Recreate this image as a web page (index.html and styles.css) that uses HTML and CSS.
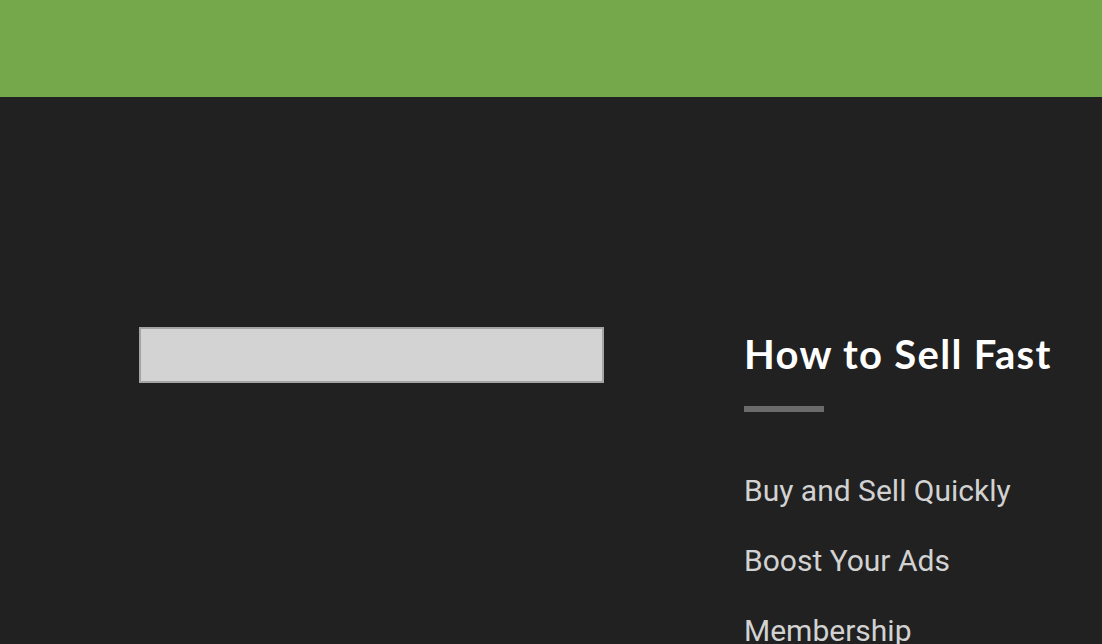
FILE: index.html
```html
<!DOCTYPE html>
<html>
<head>
<meta charset="utf-8">
<link rel="stylesheet" href="styles.css">
</head>
<body>
<header class="topbar"></header>
<footer class="footer">
  <div class="col-left">
    <div class="search-box"></div>
  </div>
  <div class="col-right">
    <h3 class="col-title">How to Sell Fast</h3>
    <div class="title-rule"></div>
    <ul class="links">
      <li><a href="#">Buy and Sell Quickly</a></li>
      <li><a href="#">Boost Your Ads</a></li>
      <li><a href="#">Membership</a></li>
    </ul>
  </div>
</footer>
</body>
</html>
```
FILE: styles.css
```css
html, body {
  margin: 0;
  padding: 0;
  background: #212121;
  overflow: hidden;
  height: 644px;
}
.topbar {
  height: 97px;
  background: #75a74b;
}
.footer {
  display: flex;
  padding: 230px 0 0 139px;
}
.col-left {
  width: 605px;
}
.search-box {
  width: 461px;
  height: 52px;
  background: #d3d3d3;
  border: 2px solid #a4a4a4;
}
.col-right {
  padding-top: 2px;
}
.col-title {
  margin: 0;
  font-family: "Lato", "Noto Sans", sans-serif;
  font-weight: 700;
  font-size: 40px;
  line-height: 50px;
  letter-spacing: 1.3px;
  color: #ffffff;
  white-space: nowrap;
}
.title-rule {
  width: 80px;
  height: 6px;
  background: #6b6b6b;
  margin-top: 27px;
}
.links {
  list-style: none;
  margin: 0;
  padding: 44px 0 0 0;
}
.links li {
  height: 70px;
}
.links a {
  font-family: "Roboto", sans-serif;
  font-size: 30px;
  line-height: 70px;
  color: #d2d2d2;
  text-decoration: none;
  display: block;
  white-space: nowrap;
}
```
